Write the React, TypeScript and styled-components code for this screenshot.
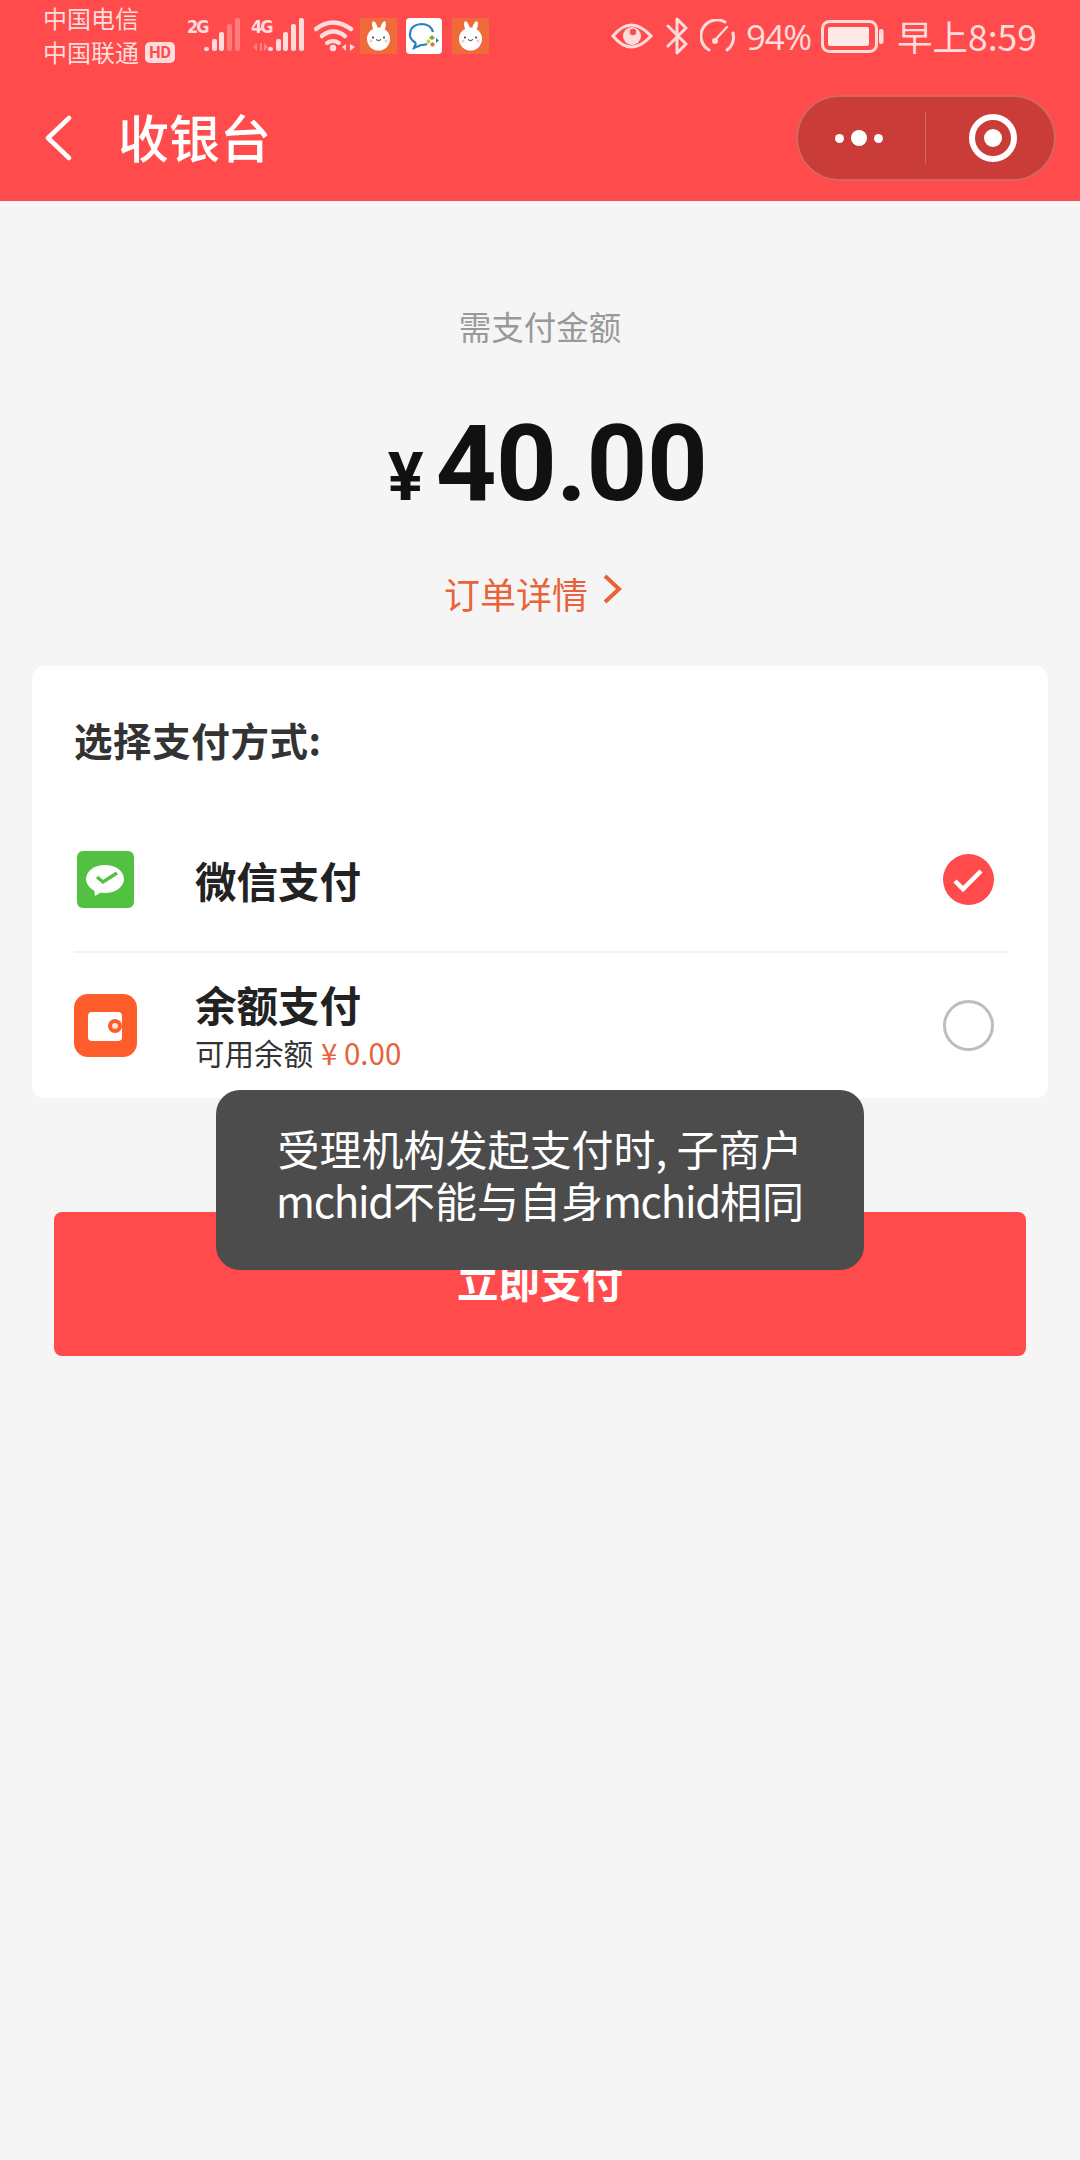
import React from "react";
import styled, { createGlobalStyle } from "styled-components";

const CJK = `"Noto Sans CJK SC", "Noto Sans", sans-serif`;
const RED = "#ff4b4b";
const ORANGE = "#e8623a";
const STATUS = "#ffdcdc";

const GlobalStyle = createGlobalStyle`
  html, body {
    margin: 0;
    padding: 0;
    background: #f5f5f5;
    font-family: ${CJK};
  }
  * {
    box-sizing: border-box;
  }
`;

const Page = styled.div`
  position: relative;
  width: 1080px;
  height: 2160px;
  overflow: hidden;
  background: #f5f5f5;
`;

const Header = styled.header`
  height: 201px;
  background: ${RED};
`;

const StatusBar = styled.div`
  height: 76px;
  display: flex;
  align-items: flex-start;
  padding: 0 43px 0 43px;
  color: ${STATUS};
`;

const Carriers = styled.div`
  width: 144px;
  padding-top: 1px;
  font-size: 24px;
  line-height: 34px;
  font-weight: 400;
`;

const CarrierLine = styled.div`
  display: flex;
  align-items: center;
  white-space: nowrap;
`;

const HdBadge = styled.span`
  width: 30px;
  height: 21px;
  margin-left: 6px;
  border-radius: 5px;
  background: ${STATUS};
  color: ${RED};
  font: 700 16px/21px "Roboto", sans-serif;
  text-align: center;
`;

const SignalGroup = styled.div<{ $width: number }>`
  position: relative;
  width: ${(p) => p.$width}px;
  height: 52px;
  margin-top: 14px;
  display: flex;
  justify-content: flex-end;
  flex-shrink: 0;
`;

const NetLabel = styled.span<{ $left: number }>`
  position: absolute;
  left: ${(p) => p.$left}px;
  top: 3px;
  font: 700 18px/20px "DejaVu Sans Condensed", "Roboto", sans-serif;
  letter-spacing: -2px;
`;

const Bars = styled.svg`
  display: block;
  margin-top: 4px;
`;

const DataArrows = styled.svg`
  position: absolute;
  left: 12px;
  top: 28px;
  opacity: 0.4;
`;

const StatusIcon = styled.svg<{ $left?: number; $top: number }>`
  display: block;
  flex-shrink: 0;
  margin-left: ${(p) => p.$left ?? 0}px;
  margin-top: ${(p) => p.$top}px;
`;

const StatusRight = styled.div`
  margin-left: auto;
  display: flex;
  align-items: flex-start;
`;

const Battery = styled.span`
  width: 67px;
  margin: 15px 0 0 9px;
  font: 400 35px/44px "Open Sans", sans-serif;
  letter-spacing: -1.4px;
  white-space: nowrap;
`;

const Clock = styled.span`
  margin: 14px 0 0 13px;
  font-size: 35.5px;
  line-height: 44px;
  font-weight: 400;
  white-space: nowrap;
`;

const NavBar = styled.div`
  height: 124px;
  display: flex;
  align-items: center;
  padding: 0 24px 0 44px;
`;

const NavTitle = styled.h1`
  margin: 0 0 5px 46px;
  color: #fff;
  font-size: 51px;
  font-weight: 500;
  line-height: 64px;
`;

const Capsule = styled.div`
  margin-left: auto;
  width: 260px;
  height: 86px;
  display: flex;
  align-items: center;
  border: 2px solid rgba(255, 255, 255, 0.22);
  border-radius: 43px;
  background: #c93c38;
`;

const CapsuleCell = styled.div<{ $shift: number }>`
  flex: 1;
  display: flex;
  align-items: center;
  justify-content: center;
  padding-left: ${(p) => Math.max(p.$shift, 0)}px;
  padding-right: ${(p) => Math.max(-p.$shift, 0)}px;
`;

const CapsuleDivider = styled.div`
  width: 1px;
  height: 52px;
  background: rgba(255, 255, 255, 0.22);
`;

const Dot = styled.span<{ $size: number }>`
  width: ${(p) => p.$size}px;
  height: ${(p) => p.$size}px;
  margin: 0 3.5px;
  border-radius: 50%;
  background: #fff;
`;

const Target = styled.div`
  width: 48px;
  height: 48px;
  display: flex;
  align-items: center;
  justify-content: center;
  border: 6px solid #fff;
  border-radius: 50%;
  &::after {
    content: "";
    width: 18px;
    height: 18px;
    border-radius: 50%;
    background: #fff;
  }
`;

const Summary = styled.section`
  display: flex;
  flex-direction: column;
  align-items: center;
`;

const DueLabel = styled.div`
  margin-top: 93px;
  color: #999;
  font-size: 32.5px;
  line-height: 64px;
`;

const Amount = styled.div`
  margin-top: 52px;
  padding-left: 15px;
  height: 108px;
  display: flex;
  align-items: baseline;
  color: #111;
  font-family: "Roboto", sans-serif;
  font-weight: 700;
  line-height: 108px;
`;

const Yen = styled.span`
  font-size: 67px;
  margin-right: 12px;
`;

const AmountValue = styled.span`
  font-size: 106px;
  letter-spacing: -0.5px;
`;

const DetailLink = styled.a`
  margin-top: 50px;
  margin-right: 14px;
  display: flex;
  align-items: center;
  color: ${ORANGE};
  font-size: 36px;
  line-height: 50px;
`;

const DetailChevron = styled.svg`
  margin: -8px 0 0 14px;
`;

const Card = styled.section`
  margin: 48px 32px 0;
  height: 432px;
  padding: 48px 40px 0 42px;
  border-radius: 12px;
  background: #fff;
`;

const CardTitle = styled.h2`
  margin: 0 0 44px;
  color: #333;
  font-size: 38.5px;
  font-weight: 700;
  line-height: 50px;
  letter-spacing: 0.6px;
`;

const MethodRow = styled.div<{ $divider?: boolean }>`
  height: ${(p) => (p.$divider ? 145 : 144)}px;
  display: flex;
  align-items: center;
  padding-right: 14px;
  border-bottom: ${(p) => (p.$divider ? "2px solid #f2f2f2" : "none")};
`;

const MethodIconSlot = styled.div`
  width: 121px;
  flex-shrink: 0;
  display: flex;
  align-items: center;
`;

const WechatIcon = styled.svg`
  margin-left: 3px;
`;

const MethodText = styled.div`
  flex: 1;
  display: flex;
  flex-direction: column;
`;

const MethodName = styled.div`
  color: #222;
  font-size: 41.5px;
  font-weight: 700;
  line-height: 48px;
`;

const MethodHint = styled.div`
  margin-top: 6px;
  color: #333;
  font-size: 29.5px;
  line-height: 36px;
`;

const Balance = styled.span`
  color: ${ORANGE};
  margin-left: 8px;
`;

const Radio = styled.div<{ $checked?: boolean }>`
  width: 51px;
  height: 51px;
  flex-shrink: 0;
  display: flex;
  align-items: center;
  justify-content: center;
  border-radius: 50%;
  border: ${(p) => (p.$checked ? "none" : "3px solid #bdbdbd")};
  background: ${(p) => (p.$checked ? RED : "#fff")};
`;

const PayButton = styled.button`
  display: block;
  width: 972px;
  height: 144px;
  margin: 114px 54px 0;
  padding: 0 0 8px;
  border: none;
  border-radius: 8px;
  background: ${RED};
  color: #fff;
  font-family: ${CJK};
  font-size: 41.5px;
  font-weight: 700;
`;

const Toast = styled.div`
  position: absolute;
  left: 216px;
  top: 1090px;
  width: 648px;
  height: 180px;
  padding-bottom: 13px;
  display: flex;
  align-items: center;
  justify-content: center;
  border-radius: 24px;
  background: #4c4c4c;
  color: #fff;
  font-size: 42px;
  line-height: 52px;
  text-align: center;
`;

const ToastText = styled.div``;

const Latin = styled.span`
  letter-spacing: -1.3px;
`;

function SignalBars({ dim }: { dim: number }) {
  const bars = [
    { x: 0, y: 29 },
    { x: 8, y: 21 },
    { x: 15, y: 14 },
    { x: 23, y: 6 },
    { x: 31, y: 0 },
  ];
  return (
    <Bars width="36" height="34" viewBox="0 0 36 34">
      {bars.map((b, i) => (
        <rect
          key={b.x}
          x={b.x}
          y={b.y}
          width="5"
          height={33 - b.y}
          rx="2"
          fill={STATUS}
          opacity={i >= 5 - dim ? 0.35 : 1}
        />
      ))}
    </Bars>
  );
}

function Bunny({ left }: { left: number }) {
  return (
    <StatusIcon $left={left} $top={18} width="37" height="36" viewBox="0 0 37 36">
      <rect width="37" height="36" fill="#f06b3a" />
      <ellipse cx="15" cy="9" rx="2.4" ry="6" transform="rotate(-18 15 9)" fill="#fff" />
      <ellipse cx="23" cy="9" rx="2.4" ry="6" transform="rotate(18 23 9)" fill="#fff" />
      <circle cx="18.5" cy="21" r="11.5" fill="#fff" />
      <circle cx="13" cy="19.5" r="1" fill="#333" />
      <circle cx="24" cy="19.5" r="1" fill="#333" />
      <path d="M16 21.5 Q18.5 24 21 21.5" stroke="#333" strokeWidth="1" fill="none" />
      <circle cx="11" cy="23" r="1.6" fill="#f9c5c5" />
      <circle cx="26" cy="23" r="1.6" fill="#f9c5c5" />
    </StatusIcon>
  );
}

export default function App() {
  return (
    <Page>
      <GlobalStyle />
      <Header>
        <StatusBar>
          <Carriers>
            <CarrierLine>中国电信</CarrierLine>
            <CarrierLine>
              中国联通
              <HdBadge>HD</HdBadge>
            </CarrierLine>
          </Carriers>
          <SignalGroup $width={53}>
            <NetLabel $left={0}>2G</NetLabel>
            <SignalBars dim={2} />
          </SignalGroup>
          <SignalGroup $width={64}>
            <NetLabel $left={11}>4G</NetLabel>
            <DataArrows width="16" height="10" viewBox="0 0 16 10" fill={STATUS}>
              <path d="M1 5 L5 1 V9 Z M8 1 L10 1 L10 9 L8 9 Z M12 1 L16 5 L12 9 Z" />
            </DataArrows>
            <SignalBars dim={0} />
          </SignalGroup>
          <StatusIcon $left={10} $top={18} width="42" height="36" viewBox="0 0 42 36" fill="none" stroke={STATUS} strokeLinecap="round">
            <path d="M2 11 Q19 -2 37 11" strokeWidth="4.5" />
            <path d="M8 18 Q19 9 31 18" strokeWidth="4.5" />
            <path d="M13 25 Q19 21 25 25" strokeWidth="4" />
            <circle cx="19" cy="30" r="3.2" fill={STATUS} stroke="none" />
            <path d="M32 33 L28 29 L32 26 Z M36 26 L41 29 L36 33 Z" fill={STATUS} stroke="none" />
          </StatusIcon>
          <Bunny left={4} />
          <StatusIcon $left={9} $top={18} width="36" height="36" viewBox="0 0 36 36">
            <rect width="36" height="36" rx="4" fill="#fff" />
            <path d="M10 25 Q3 21 4 15 Q5 7 15 6 Q25 6 27 14" fill="none" stroke="#2b7fc0" strokeWidth="2.2" />
            <path d="M10 25 L8 30 L15 27 Q19 27 21 26" fill="none" stroke="#2b7fc0" strokeWidth="2.2" />
            <path d="M26 17 L29 20 L26 22 L23 20 Z" fill="#6fae3c" />
            <path d="M23 21 L25 24 L22 26 L20 23 Z" fill="#e5c33c" />
            <path d="M27 24 L29 27 L26 29 L24 26 Z" fill="#d9752f" />
            <path d="M30 20 L33 22.5 L30 25 Z" fill="#2b7fc0" />
          </StatusIcon>
          <Bunny left={10} />
          <StatusRight>
            <StatusIcon $top={22} width="42" height="28" viewBox="0 0 42 28" fill="none">
              <path d="M2 14 Q20 -8 40 14 Q20 36 2 14 Z" stroke={STATUS} strokeWidth="3" />
              <circle cx="21" cy="14" r="9" fill={STATUS} />
              <circle cx="22" cy="10" r="3.2" fill={RED} />
            </StatusIcon>
            <StatusIcon $left={12} $top={17} width="24" height="38" viewBox="0 0 24 38" fill="none" stroke={STATUS} strokeWidth="3" strokeLinecap="round" strokeLinejoin="round">
              <path d="M3 9 L21 27 L12 36 V2 L21 11 L3 29" />
            </StatusIcon>
            <StatusIcon $left={11} $top={19} width="37" height="34" viewBox="0 0 37 34" fill="none" stroke={STATUS} strokeWidth="3" strokeLinecap="round">
              <path d="M9 31 A15.5 15.5 0 0 1 25 3" />
              <path d="M33 14 A15.5 15.5 0 0 1 27 31" />
              <path d="M15 21 L27 8" strokeWidth="2.4" />
              <circle cx="15" cy="22" r="3" fill={STATUS} stroke="none" />
            </StatusIcon>
            <Battery>94%</Battery>
            <StatusIcon $left={8} $top={20} width="63" height="33" viewBox="0 0 63 33">
              <rect x="1.5" y="1.5" width="54" height="30" rx="7" fill="none" stroke={STATUS} strokeWidth="3" />
              <rect x="7" y="7" width="41" height="19" rx="2" fill="#ffe8e8" />
              <rect x="58" y="9" width="4.5" height="15" rx="2" fill={STATUS} />
            </StatusIcon>
            <Clock>早上8:59</Clock>
          </StatusRight>
        </StatusBar>
        <NavBar>
          <svg width="28" height="46" viewBox="0 0 28 46" fill="none" stroke="#fff" strokeWidth="4.5" strokeLinecap="round" strokeLinejoin="round">
            <path d="M25 3 L4 23 L25 43" />
          </svg>
          <NavTitle>收银台</NavTitle>
          <Capsule>
            <CapsuleCell $shift={-4}>
              <Dot $size={9} />
              <Dot $size={16} />
              <Dot $size={9} />
            </CapsuleCell>
            <CapsuleDivider />
            <CapsuleCell $shift={6}>
              <Target />
            </CapsuleCell>
          </Capsule>
        </NavBar>
      </Header>

      <Summary>
        <DueLabel>需支付金额</DueLabel>
        <Amount>
          <Yen>¥</Yen>
          <AmountValue>40.00</AmountValue>
        </Amount>
        <DetailLink>
          订单详情
          <DetailChevron width="20" height="30" viewBox="0 0 20 30" fill="none" stroke={ORANGE} strokeWidth="4">
            <path d="M3 2 L17 15 L3 28" />
          </DetailChevron>
        </DetailLink>
      </Summary>

      <Card>
        <CardTitle>选择支付方式:</CardTitle>
        <MethodRow $divider>
          <MethodIconSlot>
            <WechatIcon width="57" height="57" viewBox="0 0 57 57">
              <rect width="57" height="57" rx="6" fill="#52c041" />
              <ellipse cx="28" cy="28" rx="19" ry="14" fill="#fff" />
              <path d="M17 37 L18 45 L26 40 Z" fill="#fff" />
              <path d="M20 26 L26 31 L40 22" fill="none" stroke="#52c041" strokeWidth="3.4" />
            </WechatIcon>
          </MethodIconSlot>
          <MethodText>
            <MethodName>微信支付</MethodName>
          </MethodText>
          <Radio $checked>
            <svg width="37" height="30" viewBox="0 0 37 30" fill="none" stroke="#fff" strokeWidth="4.5">
              <path d="M5 16 L13 24 L31 6" />
            </svg>
          </Radio>
        </MethodRow>
        <MethodRow>
          <MethodIconSlot>
            <svg width="63" height="63" viewBox="0 0 63 63">
              <rect width="63" height="63" rx="14" fill="#ff5c2c" />
              <rect x="14" y="18" width="34" height="29" rx="4" fill="#fff" />
              <circle cx="41" cy="32" r="7" fill="#ff5c2c" />
              <rect x="41" y="27" width="4" height="10" fill="#ff5c2c" />
              <circle cx="41" cy="32" r="3" fill="#ffe0d4" />
            </svg>
          </MethodIconSlot>
          <MethodText>
            <MethodName>余额支付</MethodName>
            <MethodHint>
              可用余额<Balance>¥ 0.00</Balance>
            </MethodHint>
          </MethodText>
          <Radio />
        </MethodRow>
      </Card>

      <PayButton>立即支付</PayButton>

      <Toast>
        <ToastText>
          受理机构发起支付时, 子商户
          <br />
          <Latin>mchid</Latin>不能与自身<Latin>mchid</Latin>相同
        </ToastText>
      </Toast>
    </Page>
  );
}
